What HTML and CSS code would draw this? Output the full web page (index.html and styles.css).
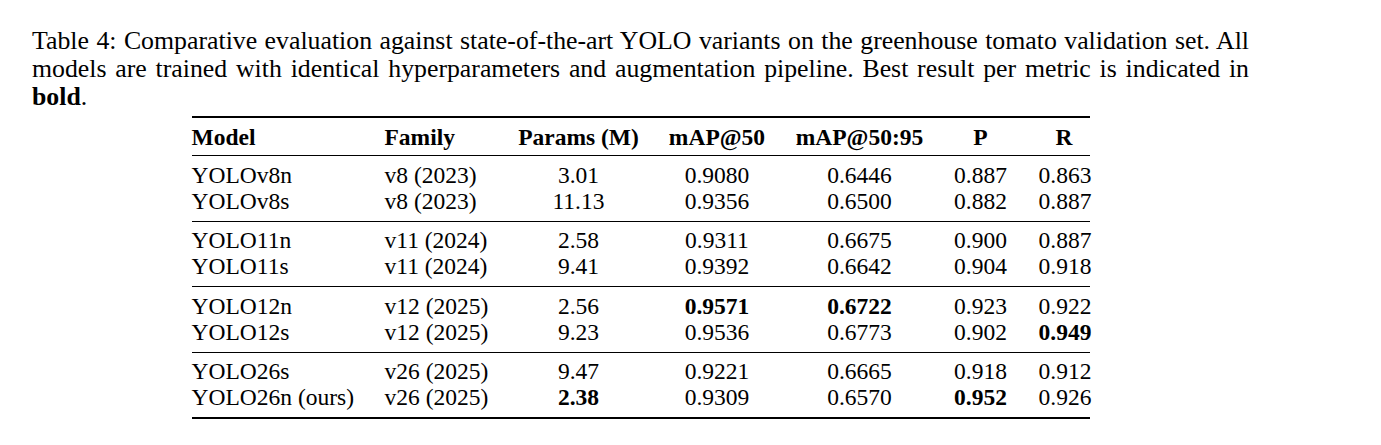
FILE: index.html
```html
<!DOCTYPE html>
<html lang="en">
<head>
<meta charset="utf-8">
<title>Table 4</title>
<link rel="stylesheet" href="styles.css">
</head>
<body>
<div class="page">
  <div class="caption">
    <div class="line just">Table 4: Comparative evaluation against state-of-the-art YOLO variants on the greenhouse tomato validation set. All</div>
    <div class="line just">models are trained with identical hyperparameters and augmentation pipeline. Best result per metric is indicated in</div>
    <div class="line"><b>bold</b>.</div>
  </div>
  <table class="results">
    <colgroup>
      <col class="c-model"><col class="c-family"><col class="c-params"><col class="c-map50"><col class="c-map5095"><col class="c-p"><col class="c-r">
    </colgroup>
    <thead>
      <tr><th class="l">Model</th><th class="l">Family</th><th>Params (M)</th><th>mAP@50</th><th>mAP@50:95</th><th>P</th><th>R</th></tr>
    </thead>
    <tbody>
      <tr class="first"><td class="l">YOLOv8n</td><td class="l">v8 (2023)</td><td>3.01</td><td>0.9080</td><td>0.6446</td><td>0.887</td><td>0.863</td></tr>
      <tr class="last"><td class="l">YOLOv8s</td><td class="l">v8 (2023)</td><td>11.13</td><td>0.9356</td><td>0.6500</td><td>0.882</td><td>0.887</td></tr>
    </tbody>
    <tbody class="sep">
      <tr class="first"><td class="l">YOLO11n</td><td class="l">v11 (2024)</td><td>2.58</td><td>0.9311</td><td>0.6675</td><td>0.900</td><td>0.887</td></tr>
      <tr class="last"><td class="l">YOLO11s</td><td class="l">v11 (2024)</td><td>9.41</td><td>0.9392</td><td>0.6642</td><td>0.904</td><td>0.918</td></tr>
    </tbody>
    <tbody class="sep">
      <tr class="first"><td class="l">YOLO12n</td><td class="l">v12 (2025)</td><td>2.56</td><td><b>0.9571</b></td><td><b>0.6722</b></td><td>0.923</td><td>0.922</td></tr>
      <tr class="last"><td class="l">YOLO12s</td><td class="l">v12 (2025)</td><td>9.23</td><td>0.9536</td><td>0.6773</td><td>0.902</td><td><b>0.949</b></td></tr>
    </tbody>
    <tbody class="sep">
      <tr class="first"><td class="l">YOLO26s</td><td class="l">v26 (2025)</td><td>9.47</td><td>0.9221</td><td>0.6665</td><td>0.918</td><td>0.912</td></tr>
      <tr class="last"><td class="l">YOLO26n (ours)</td><td class="l">v26 (2025)</td><td><b>2.38</b></td><td>0.9309</td><td>0.6570</td><td><b>0.952</b></td><td>0.926</td></tr>
    </tbody>
  </table>
</div>
</body>
</html>
```

FILE: styles.css
```css
html, body {
  margin: 0;
  padding: 0;
  background: #ffffff;
}

body {
  font-family: "Liberation Serif", "Times New Roman", serif;
  color: #000000;
}

.page {
  width: 1217px;
  margin-left: 32px;
  padding-top: 27px;
}

.caption {
  font-size: 25.8px;
  line-height: 28px;
}

.caption .line {
  white-space: nowrap;
}

.caption .line.just {
  white-space: normal;
  text-align: justify;
  text-align-last: justify;
}

.caption b {
  font-weight: bold;
}

.results {
  margin: 5px auto 0;
  width: 898px;
  table-layout: fixed;
  border-collapse: separate;
  border-spacing: 0;
  border-top: 2px solid #000;
  border-bottom: 2px solid #000;
  font-size: 23.5px;
  line-height: 26px;
}

.c-model { width: 177px; }
.c-family { width: 135px; }
.c-params { width: 150px; }
.c-map50 { width: 127px; }
.c-map5095 { width: 158px; }
.c-p { width: 84px; }
.c-r { width: 67px; }

.results th,
.results td {
  padding: 0 12px;
  text-align: center;
  white-space: nowrap;
  vertical-align: baseline;
}

.results .l {
  text-align: left;
  padding-left: 16px;
  padding-right: 16px;
}

.results th:first-child,
.results td:first-child {
  padding-left: 0;
}

.results th:last-child,
.results td:last-child {
  padding-right: 0;
  padding-left: 16px;
}

.results th {
  font-weight: bold;
  padding-top: 5.5px;
  padding-bottom: 5.5px;
  border-bottom: 1px solid #000;
}

.results tr.first td {
  padding-top: 5.5px;
}

.results tr.last td {
  padding-bottom: 7.1px;
}

.results tbody.sep tr.first td {
  border-top: 1px solid #000;
}

.results b {
  font-weight: bold;
}
```
